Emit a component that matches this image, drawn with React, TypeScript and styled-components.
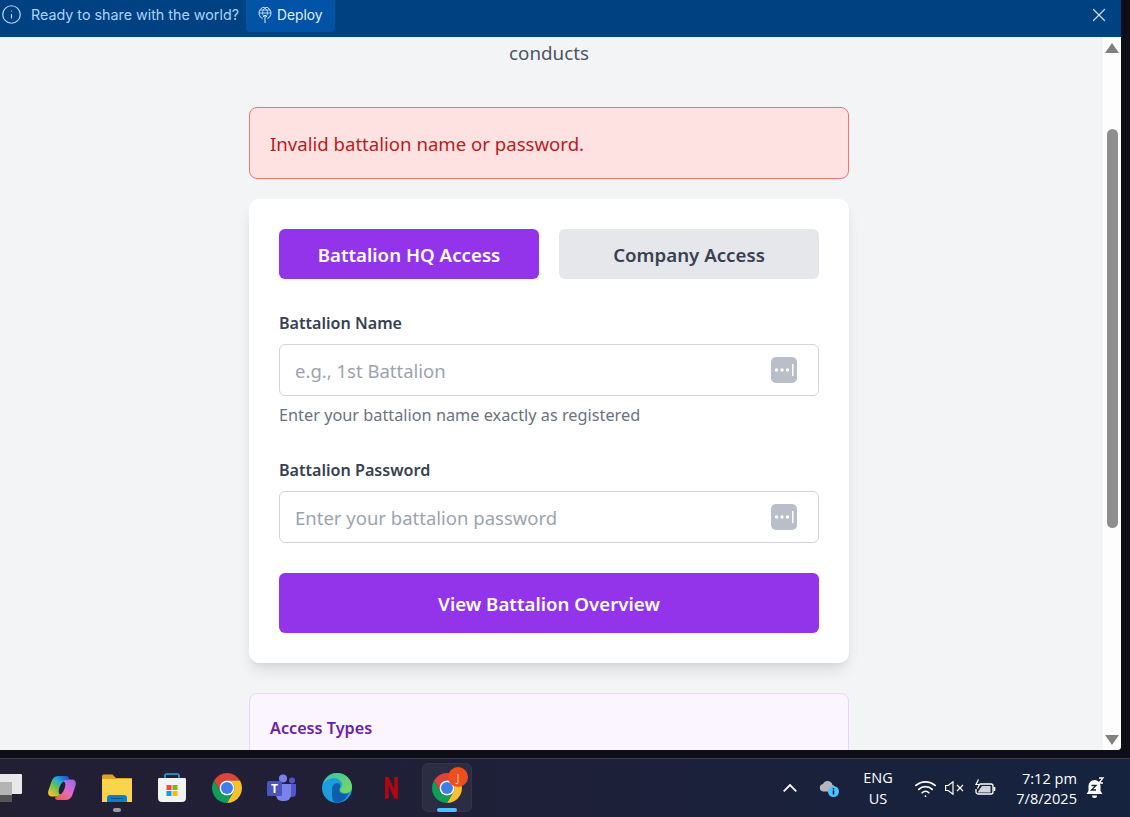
import React from "react";
import styled, { createGlobalStyle } from "styled-components";
import { Info, Wifi, X } from "lucide-react";

const GlobalStyle = createGlobalStyle`
  html, body {
    margin: 0;
    padding: 0;
    overflow: hidden;
  }
  * {
    box-sizing: border-box;
  }
`;

const uiFont = `"Noto Sans", "Open Sans", sans-serif`;
const winFont = `"Open Sans", "Noto Sans", sans-serif`;

const Screen = styled.div`
  width: 1130px;
  height: 817px;
  display: flex;
  flex-direction: column;
  overflow: hidden;
  background: #0e0e18;
  font-family: ${uiFont};
`;

const BrowserWindow = styled.div`
  width: 1121px;
  height: 750px;
  flex: none;
  display: flex;
  flex-direction: column;
  border-bottom-right-radius: 4px;
  overflow: hidden;
  background: #f3f4f6;
`;

const Banner = styled.div`
  height: 37px;
  flex: none;
  display: flex;
  align-items: flex-start;
  background: #004182;
  color: #a8d4fb;
  font-family: "Inter", "Roboto", sans-serif;
`;

const BannerInfo = styled.span`
  display: flex;
  margin: 4px 9px 0 1px;
  color: #b6d4ee;
`;

const BannerText = styled.span`
  line-height: 29px;
  font-size: 14.3px;
  width: 215px;
  white-space: nowrap;
`;

const DeployButton = styled.div`
  width: 89px;
  height: 32px;
  display: flex;
  align-items: center;
  gap: 5px;
  padding: 0 0 3px 12px;
  background: #0053a6;
  border-radius: 0 0 4px 4px;
  color: #e0eefb;
  font-size: 13.8px;
`;

const CloseButton = styled.span`
  display: flex;
  margin: 4px 11px 0 auto;
  color: #c3def7;
`;

const Body = styled.div`
  flex: 1;
  display: flex;
  min-height: 0;
`;

const Content = styled.main`
  flex: 1;
  overflow: hidden;
  padding-left: 249px;
`;

const Column = styled.div`
  width: 600px;
`;

const Subtitle = styled.div`
  height: 70px;
  padding-top: 3px;
  text-align: center;
  font-size: 18.8px;
  line-height: 26px;
  color: #4b5563;
`;

const Alert = styled.div`
  height: 72px;
  display: flex;
  align-items: center;
  padding: 1px 20px 0;
  margin-bottom: 20px;
  background: #fee2e2;
  border: 1px solid #f87171;
  border-radius: 8px;
  color: #b91c1c;
  font-size: 18.6px;
`;

const Card = styled.section`
  height: 464px;
  padding: 30px;
  margin-bottom: 30px;
  background: #fff;
  border-radius: 10px;
  box-shadow: 0 10px 15px -3px rgba(0, 0, 0, 0.1), 0 4px 6px -2px rgba(0, 0, 0, 0.05);
`;

const Tabs = styled.div`
  display: grid;
  grid-template-columns: 1fr 1fr;
  gap: 20px;
  margin-bottom: 30px;
`;

const Tab = styled.div<{ $active?: boolean }>`
  height: 50px;
  display: flex;
  align-items: center;
  justify-content: center;
  border-radius: 6px;
  font-size: 18.7px;
  font-weight: 600;
  background: ${(props) => (props.$active ? "#9333ea" : "#e5e7eb")};
  color: ${(props) => (props.$active ? "#fff" : "#374151")};
`;

const Field = styled.div`
  margin-bottom: 30px;
`;

const Label = styled.div`
  height: 27px;
  margin-bottom: 8px;
  display: flex;
  align-items: center;
  font-size: 16.1px;
  font-weight: 600;
  color: #374151;
`;

const InputBox = styled.div`
  position: relative;
  height: 52px;
  display: flex;
  align-items: center;
  padding-left: 15px;
  border: 1px solid #d1d5db;
  border-radius: 6px;
  background: #fff;
  font-size: 18.5px;
  color: #9ca3af;
`;

const KeyBadge = styled.svg`
  position: absolute;
  right: 21px;
  top: 12px;
`;

const Hint = styled.div`
  height: 30px;
  padding-top: 8px;
  font-size: 16.3px;
  line-height: 23px;
  color: #6b7280;
`;

const SubmitButton = styled.div`
  height: 60px;
  display: flex;
  align-items: center;
  justify-content: center;
  border-radius: 6px;
  background: #9333ea;
  color: #fff;
  font-size: 18.7px;
  font-weight: 600;
`;

const InfoPanel = styled.section`
  height: 200px;
  padding: 21px 20px;
  background: #faf5ff;
  border: 1px solid #e9d5ff;
  border-radius: 8px;
  color: #6b21a8;
  font-size: 16.2px;
  font-weight: 600;
  line-height: 26px;
`;

const ScrollTrack = styled.div`
  width: 18px;
  flex: none;
  display: flex;
  flex-direction: column;
  align-items: center;
  padding: 6px 0 5px;
  background: #fdfdfd;
`;

const ScrollThumb = styled.div`
  width: 11px;
  height: 399px;
  margin-top: 76px;
  margin-bottom: auto;
  border-radius: 6px;
  background: #8f8f8f;
`;

const Arrow = styled.div<{ $down?: boolean }>`
  width: 0;
  height: 0;
  border-left: 7px solid transparent;
  border-right: 7px solid transparent;
  ${(props) =>
    props.$down ? "border-top: 10px solid #808080;" : "border-bottom: 10px solid #808080;"}
`;

const Taskbar = styled.footer`
  height: 59px;
  margin-top: 8px;
  flex: none;
  display: flex;
  align-items: stretch;
  border-top: 1px solid #3a3a48;
  background: linear-gradient(90deg, #231f33 0%, #1f2039 45%, #15233f 100%);
  color: #fff;
  font-family: ${winFont};
`;

const AppList = styled.div`
  display: flex;
  margin-left: -21px;
`;

const AppSlot = styled.div<{ $active?: boolean }>`
  position: relative;
  width: 55px;
  display: flex;
  align-items: center;
  justify-content: center;

  ${(props) =>
    props.$active &&
    `&::before {
      content: "";
      position: absolute;
      left: 3px;
      right: 2px;
      top: 4px;
      bottom: 5px;
      border-radius: 6px;
      background: #2c2c42;
      border: 1px solid #34344a;
    }`}

  svg {
    position: relative;
  }
`;

const RunDot = styled.span<{ $wide?: boolean }>`
  position: absolute;
  left: 50%;
  bottom: 5px;
  width: ${(props) => (props.$wide ? "20px" : "8px")};
  height: 4px;
  transform: translateX(-50%);
  border-radius: 2px;
  background: ${(props) => (props.$wide ? "#4cc2ff" : "#9a9aa4")};
`;

const ProfileBadge = styled.span`
  position: absolute;
  top: 8px;
  right: 6px;
  width: 20px;
  height: 20px;
  display: flex;
  align-items: center;
  justify-content: center;
  border-radius: 50%;
  background: #ef4f1c;
  color: #ffc9b0;
  font-size: 11px;
  font-family: ${uiFont};
`;

const Tray = styled.div`
  margin-left: auto;
  padding-right: 15px;
  display: flex;
  align-items: center;
`;

const TrayIcon = styled.span<{ $width: number }>`
  width: ${(props) => props.$width}px;
  display: flex;
  align-items: center;
  justify-content: center;
`;

const Lang = styled.div`
  width: 40px;
  margin-right: 12px;
  text-align: center;
  font-size: 14.5px;
  line-height: 21px;
  white-space: nowrap;
`;

const Clock = styled.div`
  width: 77px;
  text-align: right;
  font-size: 14.6px;
  line-height: 20px;
  white-space: nowrap;
`;

const ChromeIcon = () => (
  <svg width="30" height="30" viewBox="4 4 40 40">
    <path d="M6.680 14A20 20 0 0 1 41.320 14H24A10 10 0 0 0 15.340 29z" fill="#db4437" />
    <path d="M41.320 14A20 20 0 0 1 24 44L32.660 29A10 10 0 0 0 24 14z" fill="#fbc02d" />
    <path d="M24 44A20 20 0 0 1 6.680 14L15.340 29A10 10 0 0 0 32.660 29z" fill="#0f9d58" />
    <circle cx="24" cy="24" r="10" fill="#fff" />
    <circle cx="24" cy="24" r="8" fill="#3f7ee8" />
  </svg>
);

const CopilotIcon = () => (
  <svg width="30" height="26" viewBox="0 0 30 26">
    <defs>
      <linearGradient id="cpA" x1="0.1" y1="0.9" x2="0.9" y2="0">
        <stop offset="0" stopColor="#f6c32c" />
        <stop offset="0.35" stopColor="#6cc24a" />
        <stop offset="0.65" stopColor="#25a8d8" />
        <stop offset="1" stopColor="#1a4fd8" />
      </linearGradient>
      <linearGradient id="cpB" x1="0.1" y1="1" x2="0.9" y2="0">
        <stop offset="0" stopColor="#f0603c" />
        <stop offset="0.5" stopColor="#e46ac8" />
        <stop offset="1" stopColor="#8f6af0" />
      </linearGradient>
    </defs>
    <path d="M11 1h7c2.500 0 4 .5 4 2.500-3 1-4.500 3-5.500 6l-3 9c-.7 2-2 3-4 3H5c-3 0-4.500-2.500-3.700-5.500l3-9C5.500 3 8 1 11 1z" fill="url(#cpA)" />
    <path d="M19 25h-7c-2.500 0-4-.5-4-2.500 3-1 4.500-3 5.500-6l3-9c.7-2 2-3 4-3h4.500c3 0 4.500 2.500 3.700 5.500l-3 9C24.500 23 22 25 19 25z" fill="url(#cpB)" />
    <ellipse cx="15" cy="13" rx="2.600" ry="6.500" transform="rotate(20 15 13)" fill="#201f36" />
  </svg>
);

const FolderIcon = () => (
  <svg width="30" height="28" viewBox="0 0 30 28">
    <path d="M0 2a1.500 1.500 0 0 1 1.500-1.500h9L14 4h16v24H0z" fill="#d9a520" />
    <rect x="0" y="5" width="30" height="23" fill="#fcd34d" />
    <path d="M5 28v-4a3 3 0 0 1 3-3h14a3 3 0 0 1 3 3v4z" fill="#0c7cd5" />
    <rect x="9" y="24" width="12" height="1" fill="#06508f" />
  </svg>
);

const StoreIcon = () => (
  <svg width="30" height="30" viewBox="0 0 30 30">
    <path d="M8 7V2.500A1.500 1.500 0 0 1 9.500 1h11A1.500 1.500 0 0 1 22 2.500V7" fill="none" stroke="#29a8e8" strokeWidth="1.600" />
    <path d="M2 5h26a1.500 1.500 0 0 1 1 1.500V25a4 4 0 0 1-4 4H5a4 4 0 0 1-4-4V6.500A1.500 1.500 0 0 1 2 5z" fill="#f3f3f3" />
    <rect x="9.500" y="12" width="5" height="5" fill="#f25022" />
    <rect x="15.500" y="12" width="5" height="5" fill="#7fba00" />
    <rect x="9.500" y="18" width="5" height="5" fill="#00a4ef" />
    <rect x="15.500" y="18" width="5" height="5" fill="#ffb900" />
  </svg>
);

const TeamsIcon = () => (
  <svg width="30" height="28" viewBox="0 0 30 28">
    <circle cx="16" cy="4.500" r="4" fill="#7b83eb" />
    <circle cx="25" cy="6.500" r="3" fill="#5059c9" />
    <path d="M21 10h8v9a4 4 0 0 1-8 0z" fill="#5059c9" />
    <path d="M9 10h15v11a6 6 0 0 1-6 6h-3a6 6 0 0 1-6-6z" fill="#7b83eb" />
    <rect x="0" y="7" width="15" height="15" rx="1.500" fill="#4b53bc" />
    <text x="7.500" y="19" fontSize="12" fontWeight="700" fill="#fff" textAnchor="middle" fontFamily="Open Sans, sans-serif">T</text>
  </svg>
);

const EdgeIcon = () => (
  <svg width="30" height="30" viewBox="0 0 30 30">
    <defs>
      <linearGradient id="edA" x1="0" y1="0" x2="1" y2="1">
        <stop offset="0" stopColor="#36c6a8" />
        <stop offset="1" stopColor="#7ed957" />
      </linearGradient>
    </defs>
    <circle cx="15" cy="15" r="15" fill="#1b9de2" />
    <path d="M1 12C3 4 9 0 15 0c8 0 15 6 15 14 0 4-3 6-7 6-3 0-5-1-5-3 0-3 2-2 2-5 0-4-4-7-8-7-5 0-9 3-11 7z" fill="url(#edA)" />
    <path d="M10 16c0-4 3-6 6-6 2 1 3 3 1.500 6-1 3 2 5 5.500 5 1.500 0 3-.5 4-1.500-2 6-7 10-12.500 10-5 0-4.500-7-4.500-13.500z" fill="#0f5ea8" />
  </svg>
);

const NetflixIcon = () => (
  <svg width="13" height="22" viewBox="0 0 14 24">
    <path d="M0 0h4l6 14V0h4v24l-4-.6L4 9v14.400L0 24z" fill="#b20710" />
  </svg>
);

const DeployIcon = () => (
  <svg width="14" height="16" viewBox="0 0 14 16" fill="none" stroke="currentColor" strokeWidth="1">
    <path d="M4.500 11.500A6 6 0 1 1 9.500 11.500" />
    <path d="M1 6h12M2 3h10M7 1c-3 2-3 6-1 9M7 1c3 2 3 6 1 9" strokeWidth="0.8" />
    <path d="M7 16V8M4.800 10.200 7 8l2.200 2.200" />
  </svg>
);

const KeyIcon = () => (
  <KeyBadge width="26" height="26" viewBox="0 0 26 26">
    <rect width="26" height="26" rx="5" fill="#b9bfca" />
    <circle cx="5.500" cy="13" r="1.700" fill="#fff" />
    <circle cx="11" cy="13" r="1.700" fill="#fff" />
    <circle cx="16.500" cy="13" r="1.700" fill="#fff" />
    <rect x="21" y="7" width="1.500" height="12" fill="#fff" />
  </KeyBadge>
);

const ChevronIcon = () => (
  <svg width="14" height="8" viewBox="0 0 14 8" fill="none" stroke="#fff" strokeWidth="1.800">
    <path d="M.7 7.300 7 1l6.300 6.300" />
  </svg>
);

const CloudInfoIcon = () => (
  <svg width="20" height="17" viewBox="0 0 20 17">
    <path d="M4 11.500a3.800 3.800 0 0 1 0-7.500 5 5 0 0 1 9.500 1A3.300 3.300 0 0 1 13 11.500z" fill="#b6b6bc" />
    <circle cx="14.500" cy="11.500" r="5.500" fill="#4cc2ff" />
    <rect x="13.700" y="10.500" width="1.600" height="4" fill="#10203a" />
    <rect x="13.700" y="8" width="1.600" height="1.600" fill="#10203a" />
  </svg>
);

const MuteIcon = () => (
  <svg width="20" height="14" viewBox="0 0 20 14" fill="none" stroke="#fff" strokeWidth="1.200">
    <path d="M.6 4.500h2.600L8 .8v12.400L3.200 9.500H.6z" />
    <path d="M12 4l6 6M18 4l-6 6" />
  </svg>
);

const BatteryIcon = () => (
  <svg width="22" height="18" viewBox="0 0 22 18" fill="none" stroke="#fff" strokeWidth="1.300">
    <path d="M5.500 5H17a2 2 0 0 1 2 2v6a2 2 0 0 1-2 2H4a2 2 0 0 1-2-2v-3" />
    <rect x="19.500" y="8" width="1.800" height="4" fill="#fff" stroke="none" />
    <path d="M3.500 13.500 8 7h8.500v6.500z" fill="#cfd3da" stroke="none" />
    <path d="M4.500 .5 2 5.500h3.500L3.500 9.500" strokeWidth="1.200" />
  </svg>
);

const SnoozeBellIcon = () => (
  <svg width="20" height="22" viewBox="0 0 20 22">
    <path d="M8.500 3a6 6 0 0 1 6 6v5l2 3H.5l2-3V9a6 6 0 0 1 6-6z" fill="#fff" />
    <path d="M6 18.500h5a2.500 2.500 0 0 1-5 0z" fill="#fff" />
    <path d="M5.500 8.500h4.500L5.500 13h4.500" fill="none" stroke="#10203a" strokeWidth="1.300" />
    <path d="M13 1h4l-4 5h4" fill="none" stroke="#fff" strokeWidth="1.300" />
  </svg>
);

export default function App() {
  return (
    <Screen>
      <GlobalStyle />
      <BrowserWindow>
        <Banner>
          <BannerInfo>
            <Info size={21} strokeWidth={1.4} />
          </BannerInfo>
          <BannerText>Ready to share with the world?</BannerText>
          <DeployButton>
            <DeployIcon />
            Deploy
          </DeployButton>
          <CloseButton>
            <X size={22} strokeWidth={1.3} />
          </CloseButton>
        </Banner>
        <Body>
          <Content>
            <Column>
              <Subtitle>conducts</Subtitle>
              <Alert>Invalid battalion name or password.</Alert>
              <Card>
                <Tabs>
                  <Tab $active>Battalion HQ Access</Tab>
                  <Tab>Company Access</Tab>
                </Tabs>
                <Field>
                  <Label>Battalion Name</Label>
                  <InputBox>
                    e.g., 1st Battalion
                    <KeyIcon />
                  </InputBox>
                  <Hint>Enter your battalion name exactly as registered</Hint>
                </Field>
                <Field>
                  <Label>Battalion Password</Label>
                  <InputBox>
                    Enter your battalion password
                    <KeyIcon />
                  </InputBox>
                </Field>
                <SubmitButton>View Battalion Overview</SubmitButton>
              </Card>
              <InfoPanel>Access Types</InfoPanel>
            </Column>
          </Content>
          <ScrollTrack>
            <Arrow />
            <ScrollThumb />
            <Arrow $down />
          </ScrollTrack>
        </Body>
      </BrowserWindow>
      <Taskbar>
        <AppList>
          <AppSlot>
            <svg width="31" height="28" viewBox="-7 0 31 28">
              <rect x="-7" y="0" width="31" height="20" rx="1" fill="#e8e8e8" />
              <rect x="-7" y="8" width="21" height="13" fill="#b4b4b4" />
              <rect x="-7" y="21" width="21" height="7" fill="#555" />
            </svg>
          </AppSlot>
          <AppSlot>
            <CopilotIcon />
          </AppSlot>
          <AppSlot>
            <FolderIcon />
            <RunDot />
          </AppSlot>
          <AppSlot>
            <StoreIcon />
          </AppSlot>
          <AppSlot>
            <ChromeIcon />
          </AppSlot>
          <AppSlot>
            <TeamsIcon />
          </AppSlot>
          <AppSlot>
            <EdgeIcon />
          </AppSlot>
          <AppSlot>
            <NetflixIcon />
          </AppSlot>
          <AppSlot $active>
            <ChromeIcon />
            <ProfileBadge>J</ProfileBadge>
            <RunDot $wide />
          </AppSlot>
        </AppList>
        <Tray>
          <TrayIcon $width={20}>
            <ChevronIcon />
          </TrayIcon>
          <TrayIcon $width={58}>
            <CloudInfoIcon />
          </TrayIcon>
          <Lang>
            ENG
            <br />
            US
          </Lang>
          <TrayIcon $width={30}>
            <Wifi size={23} strokeWidth={1.8} />
          </TrayIcon>
          <TrayIcon $width={30}>
            <MuteIcon />
          </TrayIcon>
          <TrayIcon $width={30}>
            <BatteryIcon />
          </TrayIcon>
          <Clock>
            7:12 pm
            <br />
            7/8/2025
          </Clock>
          <TrayIcon $width={38}>
            <SnoozeBellIcon />
          </TrayIcon>
        </Tray>
      </Taskbar>
    </Screen>
  );
}
